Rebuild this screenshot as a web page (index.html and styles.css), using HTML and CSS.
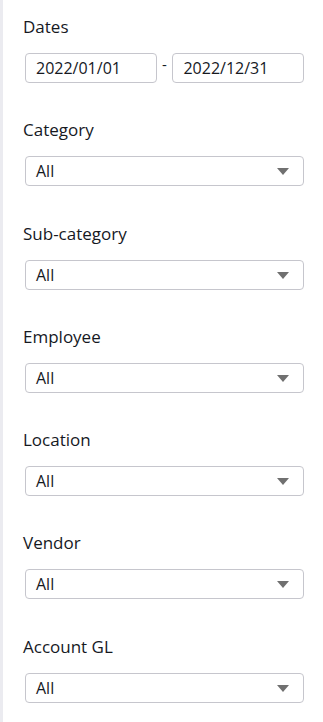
FILE: index.html
```html
<!DOCTYPE html>
<html lang="en">
<head>
    <meta charset="UTF-8">
    <meta name="viewport" content="width=device-width, initial-scale=1.0">
    <title>Filters</title>
    <link rel="stylesheet" href="styles.css">
</head>
<body>
    <aside class="filters">
        <div class="filter">
            <label class="filter-label">Dates</label>
            <div class="date-range">
                <div class="field date">2022/01/01</div>
                <span class="dash">-</span>
                <div class="field date">2022/12/31</div>
            </div>
        </div>
        <div class="filter">
            <label class="filter-label">Category</label>
            <div class="field select">All<span class="caret"></span></div>
        </div>
        <div class="filter">
            <label class="filter-label">Sub-category</label>
            <div class="field select">All<span class="caret"></span></div>
        </div>
        <div class="filter">
            <label class="filter-label">Employee</label>
            <div class="field select">All<span class="caret"></span></div>
        </div>
        <div class="filter">
            <label class="filter-label">Location</label>
            <div class="field select">All<span class="caret"></span></div>
        </div>
        <div class="filter">
            <label class="filter-label">Vendor</label>
            <div class="field select">All<span class="caret"></span></div>
        </div>
        <div class="filter">
            <label class="filter-label">Account GL</label>
            <div class="field select">All<span class="caret"></span></div>
        </div>
    </aside>
</body>
</html>
```

FILE: styles.css
```css
body {
    margin: 0;
    padding: 0;
    background: #fff;
    font-family: "Open Sans", "Noto Sans", Arial, sans-serif;
    color: #16191f;
}
.filters {
    border-left: 3px solid #ebebf0;
    min-height: 722px;
    box-sizing: border-box;
    padding: 16px 19px 0 20px;
}
.filter {
    margin-bottom: 36.3px;
}
.filter-label {
    display: block;
    font-size: 17px;
    line-height: 22px;
    margin-bottom: 15px;
}
.field {
    box-sizing: border-box;
    height: 30px;
    border: 1px solid #c6c6cd;
    border-radius: 4px;
    padding: 0 10px;
    font-size: 16px;
    line-height: 28px;
    margin-left: 2px;
}
.date-range {
    display: flex;
    align-items: flex-start;
}
.date {
    width: 132px;
}
.date + .dash + .date {
    margin-left: 0;
}
.dash {
    width: 16px;
    text-align: center;
    font-size: 15px;
    line-height: 22px;
}
.select {
    position: relative;
}
.caret {
    position: absolute;
    right: 14px;
    top: 11px;
    width: 0;
    height: 0;
    border-left: 6.5px solid transparent;
    border-right: 6.5px solid transparent;
    border-top: 7px solid #707070;
}
```
